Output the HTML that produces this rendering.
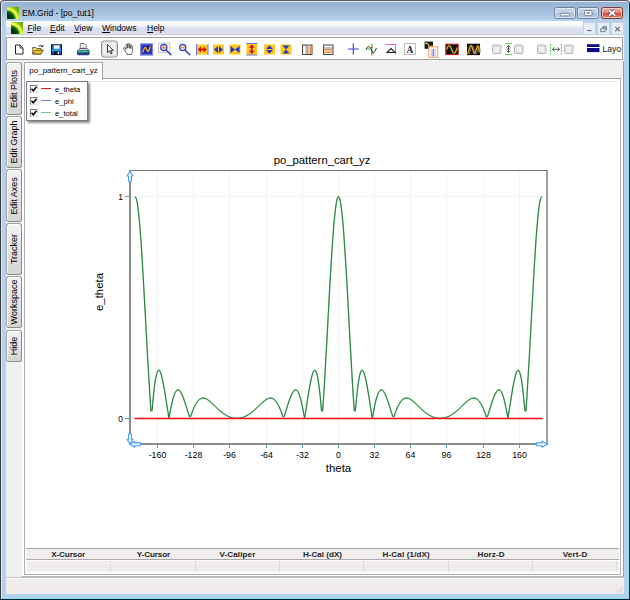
<!DOCTYPE html>
<html><head><meta charset="utf-8">
<style>
*{margin:0;padding:0;box-sizing:border-box}
html,body{width:630px;height:600px;overflow:hidden;background:#fff}
body{font-family:"Liberation Sans",sans-serif;font-size:11px;color:#000;position:relative}
.abs{position:absolute}
#frame{left:0;top:0;width:630px;height:600px;border-radius:4px 4px 0 0;background:linear-gradient(#97b3d3 0,#9cb8d7 6px,#b5d1eb 20px,#b6d1eb 100%);border:1px solid #5c5c5c;border-left-color:#3c3c3a;box-shadow:inset 1px 1px 0 0 #d8e9fa}
#title{left:22px;top:8px;font-size:8.5px;line-height:10px;color:#000;white-space:nowrap}
.cap{top:7px;height:12px;width:22px;border:1px solid #71819b;border-radius:2.5px;background:linear-gradient(#c6d8ed 0,#bcd0e8 49%,#a6c0de 50%,#b5cce7 100%);box-shadow:inset 0 0 0 1px rgba(255,255,255,.5)}
#bclose{background:linear-gradient(#eaa99c 0,#df8b78 49%,#cb4a30 50%,#dd8a6c 100%);border-color:#7a3a3c}
#menubar{left:6px;top:21px;width:577px;height:14px;background:linear-gradient(#fff 0,#f6f8fc 30%,#e0e4f1 48%,#d9ddee 62%,#dadeef 88%,#c9cce2 100%)}
.mi{top:23px;font-size:8.5px;line-height:10px;white-space:nowrap}
.mi u{text-decoration:underline}
.mdi{top:22px;width:13px;height:13px;border:1px solid #c9d1dc;background:#e6eef9}
#below{left:6px;top:35px;width:618px;height:559px;background:linear-gradient(#ececec 0,#fff 1px,#fff 2px,#f0f0f0 2px)}
#toolbar{left:6px;top:37px;width:617px;height:23px;background:#fff;border:1px solid #a0a0a0}
.stab{left:6px;width:16px;border:1px solid #a2a2a2;border-radius:3px 3px 3px 3px;border-right:1px solid #8c8c8c;border-bottom-color:#8c8c8c;background:linear-gradient(180deg,#f3f3f3 0,#e6e6e6 40%,#d5d5d5 100%);box-shadow:inset 1px 1px 0 rgba(255,255,255,.8)}
.stab span{position:absolute;left:50%;top:50%;white-space:nowrap;transform:translate(-50%,-50%) rotate(-90deg);font-size:9px;line-height:10px}
#ptab{left:24px;top:62px;width:79px;height:18px;background:#fff;border:1px solid #a6a6ae;border-bottom:none}
#ptab span{position:absolute;left:4.3px;top:2.7px;font-size:8px;line-height:10px;white-space:nowrap}
#panel{left:24px;top:78px;width:597px;height:497px;background:#fff;border:1px solid #aeaeb6;border-top-color:#9c9ca4}
#legend{left:26.400px;top:80.800px;width:61.600px;height:40.200px;background:#fff;border:1px solid #7a7a7a;box-shadow:2px 2px 2px rgba(0,0,0,.45)}
.cb{left:29.500px;width:8px;height:8px;border:1px solid #e4e4e4;border-top-color:#7c7c7c;border-left-color:#7c7c7c;background:#fff}
.ll{left:40.800px;width:10px;height:1.300px}
.lt{left:55px;font-size:7.6px;line-height:9px;white-space:nowrap}
.th{top:548.700px;height:11px;font-size:7.8px;font-weight:bold;line-height:11px;text-align:center;white-space:nowrap;color:#222}
#status{left:6px;top:578px;width:618px;height:16px;background:#f0edec;border-top:1px solid #fff}
svg text{font-family:"Liberation Sans",sans-serif}
</style></head><body>
<div id="frame" class="abs"></div>
<div class="abs" style="left:628px;top:3px;width:1px;height:596px;background:#96dcff"></div><div class="abs" style="left:629px;top:3px;width:1px;height:597px;background:#0e2c3a"></div><div class="abs" style="left:2px;top:598px;width:627px;height:1px;background:#7adcff"></div><div class="abs" style="left:0;top:599px;width:630px;height:1px;background:#0a2028"></div>
<!-- title -->
<svg class="abs" style="left:7px;top:7px" width="12" height="12" viewBox="0 0 12 12"><defs><radialGradient id="ig" gradientUnits="userSpaceOnUse" cx="-0.500" cy="12.500" r="17"><stop offset="0" stop-color="#2a5a14"/><stop offset=".18" stop-color="#0a3008"/><stop offset=".4" stop-color="#0c4a0c"/><stop offset=".5" stop-color="#2a8a14"/><stop offset=".58" stop-color="#d8ee30"/><stop offset=".64" stop-color="#ffff48"/><stop offset=".72" stop-color="#c0e428"/><stop offset=".8" stop-color="#7cc010"/><stop offset="1" stop-color="#5c9c08"/></radialGradient></defs><rect width="12" height="12" fill="url(#ig)"/></svg>
<div id="title" class="abs">EM.Grid - [po_tut1]</div>
<div class="abs cap" style="left:554px"></div>
<div class="abs cap" style="left:577px"></div>
<div id="bclose" class="abs cap" style="left:601px"></div>
<svg class="abs" style="left:554px;top:7px" width="70" height="12" viewBox="0 0 70 12">
<rect x="6.500" y="6.300" width="9" height="2.600" rx="1.200" fill="#fff" stroke="#6a7282" stroke-width=".9"/>
<rect x="30.500" y="3.500" width="7.500" height="5.200" rx="1" fill="#fff" stroke="#6a7282" stroke-width=".9"/><rect x="32.600" y="5.400" width="3.300" height="1.300" fill="#5b6a88"/>
<path d="M55.200 3.300 L61.200 8.700 M61.200 3.300 L55.200 8.700" stroke="#6a5560" stroke-width="3.200" stroke-linecap="butt"/>
<path d="M55.200 3.300 L61.200 8.700 M61.200 3.300 L55.200 8.700" stroke="#fff" stroke-width="1.800"/>
</svg>
<!-- menubar -->
<div id="menubar" class="abs"></div>
<svg class="abs" style="left:11px;top:22px" width="12" height="12" viewBox="0 0 12 12"><rect width="12" height="12" fill="url(#ig)"/></svg>
<div class="abs mi" style="left:27.5px"><u>F</u>ile</div>
<div class="abs mi" style="left:50px"><u>E</u>dit</div>
<div class="abs mi" style="left:74px"><u>V</u>iew</div>
<div class="abs mi" style="left:102px"><u>W</u>indows</div>
<div class="abs mi" style="left:147px"><u>H</u>elp</div>
<div class="abs mdi" style="left:583px"></div>
<div class="abs mdi" style="left:597px"></div>
<div class="abs mdi" style="left:611px"></div>
<svg class="abs" style="left:583px;top:22px" width="41" height="13" viewBox="0 0 41 13">
<rect x="4" y="8" width="4.600" height="1.100" fill="#6b7484"/>
<path d="M19.300 4.700 h4.200 v3.600 M19.300 5.700 h4.200" fill="none" stroke="#6b7484" stroke-width=".9"/><rect x="17.800" y="6.700" width="4.200" height="3" fill="#e6eef9" stroke="#6b7484" stroke-width=".9"/>
<path d="M32.200 4.900 L36.800 9.300 M36.800 4.900 L32.200 9.300" stroke="#6b7484" stroke-width="1.200"/>
</svg>
<div id="below" class="abs"></div>
<div id="toolbar" class="abs"></div>
<svg class="abs" style="left:0;top:0" width="630" height="600" viewBox="0 0 630 600">
<!-- new -->
<path d="M15.500 45 h4.500 l3 3 v6 h-7.500 z" fill="#fff" stroke="#222" stroke-width="1"/>
<path d="M20 45 v3 h3" fill="none" stroke="#222" stroke-width=".8"/>
<!-- open -->
<path d="M32.700 54 v-6.500 h3 l1 1 h4.300 v5.500 z" fill="#ffe56a" stroke="#4a3c0c" stroke-width=".8"/>
<path d="M32.700 54 l2.400 -3.800 h8.300 l-2.400 3.800 z" fill="#f2c22c" stroke="#4a3c0c" stroke-width=".8"/>
<path d="M38.500 46.300 q2.300 -2 4.300 0.300 M42.900 46.700 l-1.700 -.2 M42.900 46.700 l.2 -1.600" fill="none" stroke="#222" stroke-width=".9"/>
<!-- save -->
<rect x="51.500" y="44.800" width="10" height="9.800" fill="#1f60c8" stroke="#0a1430" stroke-width="1"/>
<rect x="53.800" y="45.300" width="5.800" height="3.500" fill="#f2f5fb"/>
<rect x="52" y="49.300" width="9" height="1.600" fill="#30a8ee"/>
<rect x="53.800" y="51.400" width="5.800" height="3.200" fill="#0a1430"/>
<rect x="57.600" y="52" width="1.400" height="2" fill="#f2f5fb"/>
<!-- print -->
<path d="M80.300 43.500 h4.200 l1.700 1.700 v3.800 h-5.900 z" fill="#fff" stroke="#555" stroke-width=".8"/>
<path d="M82 46 h2.500 M82 47.500 h3" stroke="#aaa" stroke-width=".6"/>
<path d="M77.800 51 l2 -2.500 h7.400 l2 2.500 z" fill="#d4d8de" stroke="#3a4060" stroke-width=".8"/>
<rect x="77.400" y="50.600" width="11.700" height="4.200" rx=".9" fill="#24368c" stroke="#1a2860" stroke-width=".8"/>
<rect x="77.800" y="50.500" width="10.900" height="1.900" fill="#3cc88c"/>
<!-- pointer button -->
<rect x="101.500" y="41" width="16" height="16" rx="2.500" fill="#efefef" stroke="#8a8a8a" stroke-width="1"/>
<rect x="102.500" y="42" width="14" height="14" rx="1.800" fill="none" stroke="#d6d6d6" stroke-width="1"/>
<path d="M107.500 44.500 v8.200 l2 -1.800 l1.400 3 l1.200 -.6 l-1.400 -2.900 h2.600 z" fill="#fff" stroke="#222" stroke-width=".9" stroke-linejoin="round"/>
<!-- hand -->
<path transform="translate(0,-.8)" d="M126 50.500 V45.800 a.8 .8 0 0 1 1.600 0 V49 V45 a.8 .8 0 0 1 1.600 0 V49 V45.600 a.8 .8 0 0 1 1.600 0 V49.500 V47.200 a.8 .8 0 0 1 1.600 0 V52 q0 1.600 -1 2.600 V55.300 H127 V54.400 q-1 -1 -1.800 -2.600 L123.500 49.600 q-.5 -1 .3 -1.300 q.7 -.2 1.200 .6 Z" fill="#fff" stroke="#3a3a3a" stroke-width=".75" stroke-linejoin="round"/>
<!-- blue sine icon -->
<rect x="140.700" y="43.900" width="11.800" height="11.100" fill="#1a22a8" stroke="#7d88ea" stroke-width="1.300"/>
<rect x="142.300" y="45.500" width="8.600" height="7.900" fill="none" stroke="#4152cc" stroke-width=".6"/>
<path d="M142.300 52.300 C143.600 52.300 143.800 47.300 145.200 47.300 S146.700 51.600 148 51.600 S149.400 46.600 151 46.600" fill="none" stroke="#f0c21e" stroke-width="1.300"/>
<!-- zoom in -->
<rect x="158.500" y="43.100" width="11.300" height="9.400" fill="#fbfbfb" stroke="#c6c6c6" stroke-width="1"/>
<circle cx="163.800" cy="47.600" r="3.100" fill="#fff2c8" stroke="#3848d0" stroke-width="1.300"/>
<path d="M162 47.600 h3.600 M163.800 45.800 v3.600" stroke="#f08426" stroke-width="1.300"/>
<path d="M166.300 50.200 l4.600 4.600" stroke="#2a3cc0" stroke-width="1.500" stroke-linecap="round"/>
<!-- zoom out -->
<circle cx="182.700" cy="47.600" r="3.100" fill="#fff2c8" stroke="#3848d0" stroke-width="1.300"/>
<path d="M180.900 47.600 h3.600" stroke="#f08426" stroke-width="1.300"/>
<path d="M185.200 50.200 l4.600 4.600" stroke="#2a3cc0" stroke-width="1.500" stroke-linecap="round"/>
<!-- yellow icons -->
<g>
<rect x="196.500" y="44.500" width="11.500" height="10" fill="#fdc81e"/>
<path d="M196.500 44 v11 M208 44 v11" stroke="#6a78dc" stroke-width="1"/>
<path d="M197.800 49.500 l3.200 -2.900 v5.800 z M206.700 49.500 l-3.200 -2.900 v5.800 z" fill="#d01010"/><path d="M199 49.500 h6.500" stroke="#d01010" stroke-width="1.700"/>
<rect x="213" y="44.500" width="11" height="10" fill="#fdc81e"/>
<path d="M214 49.500 l4 -3.500 v7 z M223 49.500 l-4 -3.500 v7 z" fill="#2338c8"/>
<rect x="229.500" y="44.500" width="11" height="10" fill="#fdc81e"/>
<path d="M230.500 46 l4.500 3.500 l-4.500 3.500 z M239.500 46 l-4.500 3.500 l4.500 3.500 z" fill="#2338c8"/>
<rect x="246.500" y="43.500" width="10.500" height="11.500" fill="#fdc81e"/>
<path d="M246 43.500 h11.500 M246 55 h11.500" stroke="#6a78dc" stroke-width="1"/>
<path d="M251.800 44.600 l-2.900 3.200 h5.800 z M251.800 53.900 l-2.900 -3.200 h5.800 z" fill="#d01010"/><path d="M251.800 46 v6.500" stroke="#d01010" stroke-width="1.700"/>
<rect x="264" y="44.500" width="11" height="10" fill="#fdc81e"/>
<path d="M269.500 45.300 l-3.500 3.700 h7 z M269.500 53.800 l-3.500 -3.700 h7 z" fill="#2338c8"/>
<rect x="280.500" y="44.500" width="11" height="10" fill="#fdc81e"/>
<path d="M282.500 45.500 h7 l-3.500 4 z M282.500 53.500 h7 l-3.500 -4 z" fill="#2338c8"/>
</g>
<!-- table icons -->
<rect x="302.500" y="45" width="9.500" height="9.500" fill="#fff" stroke="#444" stroke-width="1"/>
<rect x="307" y="45.500" width="1.500" height="8.500" fill="#e88a4a"/><rect x="309.500" y="45.500" width="1.500" height="8.500" fill="#e88a4a"/>
<path d="M306 45 v9.500" stroke="#666" stroke-width=".8"/>
<rect x="323.500" y="45" width="9.500" height="9.500" fill="#fff" stroke="#444" stroke-width="1"/>
<rect x="324" y="49" width="8.500" height="1.500" fill="#e88a4a"/><rect x="324" y="51.500" width="8.500" height="1.500" fill="#e88a4a"/>
<path d="M323.500 48 h9.500" stroke="#666" stroke-width=".8"/>
<!-- plus -->
<path d="M353.300 43.500 v11 M347.800 49 h11" stroke="#3a48c4" stroke-width="1.150"/>
<!-- curve marker -->
<path d="M371.800 43.500 v12 M366 49 h4" stroke="#30c040" stroke-width="1.100"/>
<path d="M366 49.500 q2 -5 4.500 -1.500 l2.500 5.500 q1.500 -1 3.500 -5.500" fill="none" stroke="#333" stroke-width="1"/>
<circle cx="371.800" cy="47.300" r="1" fill="#e86010"/>
<!-- pink triangle -->
<path d="M385 44.500 h10.500 v10" fill="none" stroke="#f060d0" stroke-width="1"/>
<path d="M387 52.500 l4 -4 l4 4 z" fill="#fff" stroke="#222" stroke-width="1.100"/>
<!-- A box -->
<rect x="404.500" y="43.500" width="11" height="11" fill="#fff" stroke="#bdbdbd" stroke-width="1"/>
<text x="410" y="52.500" style="font-family:'Liberation Serif',serif;font-weight:bold" font-size="9.500" text-anchor="middle" fill="#1a1a3a">A</text>
<!-- black/orange -->
<rect x="424.600" y="41.600" width="8.400" height="7.200" fill="#111"/>
<path d="M425.300 44.200 C426.300 42.600 427.300 42.600 428.300 44.800 S430.500 47.800 432.300 45.600" fill="none" stroke="#f0cc20" stroke-width="1.300"/>
<rect x="428.700" y="46.800" width="9" height="10.500" fill="#fff" stroke="#f59454" stroke-width="1"/>
<path d="M431.300 49 v7.500 M435.200 49 v7.500" stroke="#d0d0dc" stroke-width="1.400"/><path d="M433.250 49 v7.500" stroke="#5566e4" stroke-width="1.200"/>
<!-- black sine red border -->
<rect x="445.800" y="44.200" width="12.400" height="10.400" fill="#111" stroke="#c81818" stroke-width="1"/>
<path d="M446.800 49.500 C447.800 45 449.600 44.500 450.800 47.500 S453.500 55 455.200 52.500 S456.800 48.500 457.300 47.500" fill="none" stroke="#e8c418" stroke-width="1.200"/>
<!-- black sine 2 -->
<rect x="467" y="43.700" width="13" height="11.400" fill="#111"/>
<path d="M468.500 53.500 C469.500 50 470.500 45 471.800 45.500 S473.800 54 475 53.500 S477 46 478.200 46 S479.300 50 479.600 52" fill="none" stroke="#7a86a8" stroke-width=".8" transform="translate(.9,.6)"/>
<path d="M467.800 54 C469 50 470 45 471.300 45.500 S473.300 54 474.600 53.500 S476.600 46 477.800 46 S479 50 479.300 52.500" fill="none" stroke="#f0a818" stroke-width="1.300"/>
<!-- checkboxes -->
<g fill="#f2f2f2" stroke="#b4b4b4" stroke-width="1">
<rect x="492.500" y="45" width="8.500" height="8.500" rx="1"/><rect x="514.500" y="45" width="8.500" height="8.500" rx="1"/>
<rect x="537.500" y="45" width="8.500" height="8.500" rx="1"/><rect x="564.500" y="45" width="8.500" height="8.500" rx="1"/>
</g>
<g fill="none" stroke="#dcdcdc" stroke-width="1">
<rect x="494" y="46.500" width="5.500" height="5.500"/><rect x="516" y="46.500" width="5.500" height="5.500"/><rect x="539" y="46.500" width="5.500" height="5.500"/><rect x="566" y="46.500" width="5.500" height="5.500"/>
</g>
<path d="M505 43.500 h7 M505 54.500 h7" stroke="#50e050" stroke-width="1.200"/>
<path d="M508.500 45.500 v7 M506.500 47.500 l2 -2 l2 2 M506.500 50.500 l2 2 l2 -2 M507 49 h3" fill="none" stroke="#444" stroke-width=".9"/>
<path d="M550.500 44 v10.500 M561.500 44 v10.500" stroke="#50e050" stroke-width="1.200" stroke-dasharray="2 1"/>
<path d="M552.500 49.300 h7 M554.500 47.300 l-2 2 l2 2 M557.500 47.300 l2 2 l-2 2" fill="none" stroke="#444" stroke-width=".9"/>
<!-- navy -->
<rect x="587" y="44.200" width="12.500" height="2.800" fill="#0a0a82"/><rect x="587" y="48" width="12.500" height="4.100" fill="#0a0a82"/>
<clipPath id="tbc"><rect x="7" y="38" width="614.300" height="21"/></clipPath><text x="602.500" y="51.800" font-size="8.500" fill="#111" clip-path="url(#tbc)">Layou</text>
</svg>

<!-- side tabs -->
<div class="abs" style="left:623px;top:61px;width:1px;height:516px;background:#9a9a9a"></div>
<div class="abs stab" style="top:62px;height:53px"><span>Edit Plots</span></div>
<div class="abs stab" style="top:116px;height:52px"><span>Edit Graph</span></div>
<div class="abs stab" style="top:169px;height:53px"><span>Edit Axes</span></div>
<div class="abs stab" style="top:223px;height:52px"><span>Tracker</span></div>
<div class="abs stab" style="top:276px;height:52px"><span>Workspace</span></div>
<div class="abs stab" style="top:330px;height:32px"><span>Hide</span></div>
<!-- panel -->
<div class="abs" style="left:22px;top:79px;width:601px;height:497px;background:#fff"></div>
<div id="panel" class="abs"></div>
<div class="abs" style="left:26px;top:81px;width:593px;height:1px;background:#e6e6e6"></div>
<div id="ptab" class="abs"><span>po_pattern_cart_yz</span></div>
<!-- chart -->
<svg class="abs" style="left:0;top:0" width="630" height="600" viewBox="0 0 630 600">
<g stroke="#f4f4f4" stroke-width="1" shape-rendering="crispEdges">
<line x1="157.5" y1="171" x2="157.5" y2="443"/>
<line x1="193.5" y1="171" x2="193.5" y2="443"/>
<line x1="229.5" y1="171" x2="229.5" y2="443"/>
<line x1="266.5" y1="171" x2="266.5" y2="443"/>
<line x1="302.5" y1="171" x2="302.5" y2="443"/>
<line x1="338.5" y1="171" x2="338.5" y2="443"/>
<line x1="374.5" y1="171" x2="374.5" y2="443"/>
<line x1="410.5" y1="171" x2="410.5" y2="443"/>
<line x1="446.5" y1="171" x2="446.5" y2="443"/>
<line x1="483.5" y1="171" x2="483.5" y2="443"/>
<line x1="519.5" y1="171" x2="519.5" y2="443"/>
<line x1="131" y1="196.500" x2="547" y2="196.500"/>
<line x1="131" y1="418.500" x2="547" y2="418.500"/>
</g>
<path d="M130 170.500 H547.500" fill="none" stroke="#707070" stroke-width="1"/><rect x="546.300" y="170" width="1.450" height="275" fill="#7e7e7e"/>
<rect x="129" y="170" width="2" height="274" fill="#8c8c8c"/>
<rect x="129" y="443" width="419" height="2" fill="#8c8c8c"/>
<g stroke="#4aa3b5" stroke-width="1" shape-rendering="crispEdges"><line x1="125" y1="196.500" x2="129" y2="196.500"/><line x1="125" y1="418.500" x2="129" y2="418.500"/>
<line x1="157.5" y1="445" x2="157.5" y2="448"/>
<line x1="193.5" y1="445" x2="193.5" y2="448"/>
<line x1="229.5" y1="445" x2="229.5" y2="448"/>
<line x1="266.5" y1="445" x2="266.5" y2="448"/>
<line x1="302.5" y1="445" x2="302.5" y2="448"/>
<line x1="338.5" y1="445" x2="338.5" y2="448"/>
<line x1="374.5" y1="445" x2="374.5" y2="448"/>
<line x1="410.5" y1="445" x2="410.5" y2="448"/>
<line x1="446.5" y1="445" x2="446.5" y2="448"/>
<line x1="483.5" y1="445" x2="483.5" y2="448"/>
<line x1="519.5" y1="445" x2="519.5" y2="448"/>
</g>
<polyline fill="none" stroke="#8ed496" stroke-width="1.500" stroke-linejoin="round" points="135.1,196.5 136.2,198.3 137.4,203.5 138.5,212.1 139.6,223.8 140.8,238.3 141.9,255.0 143.0,273.6 144.1,293.5 145.3,314.2 146.4,335.1 147.5,355.7 148.7,375.5 149.8,394.0 150.9,410.9 152.0,410.8 153.2,398.0 154.3,387.7 155.4,379.7 156.6,374.2 157.7,371.1 158.8,370.1 160.0,371.2 161.1,374.0 162.2,378.3 163.3,383.8 164.5,390.1 165.6,397.1 166.7,404.2 167.9,411.4 169.0,418.3 170.1,411.9 171.3,406.1 172.4,401.1 173.5,396.9 174.6,393.7 175.8,391.5 176.9,390.2 178.0,389.8 179.2,390.3 180.3,391.5 181.4,393.4 182.6,395.9 183.7,398.8 184.8,402.0 185.9,405.5 187.1,409.1 188.2,412.7 189.3,416.3 190.5,416.9 191.6,413.7 192.7,410.7 193.8,408.0 195.0,405.6 196.1,403.6 197.2,401.8 198.4,400.5 199.5,399.4 200.6,398.7 201.8,398.2 202.9,398.0 204.0,398.1 205.1,398.4 206.3,398.9 207.4,399.5 208.5,400.3 209.7,401.2 210.8,402.2 211.9,403.2 213.1,404.3 214.2,405.4 215.3,406.5 216.4,407.6 217.6,408.7 218.7,409.7 219.8,410.7 221.0,411.7 222.1,412.6 223.2,413.4 224.4,414.2 225.5,414.9 226.6,415.5 227.7,416.1 228.9,416.6 230.0,417.1 231.1,417.5 232.3,417.8 233.4,418.0 234.5,418.2 235.6,418.3 236.8,418.3 237.9,418.3 239.0,418.2 240.2,418.0 241.3,417.8 242.4,417.5 243.6,417.1 244.7,416.6 245.8,416.1 246.9,415.5 248.1,414.9 249.2,414.2 250.3,413.4 251.5,412.6 252.6,411.7 253.7,410.7 254.9,409.7 256.0,408.7 257.1,407.6 258.2,406.5 259.4,405.4 260.5,404.3 261.6,403.2 262.8,402.2 263.9,401.2 265.0,400.3 266.1,399.5 267.3,398.9 268.4,398.4 269.5,398.1 270.7,398.0 271.8,398.2 272.9,398.7 274.1,399.4 275.2,400.5 276.3,401.8 277.4,403.6 278.6,405.6 279.7,408.0 280.8,410.7 282.0,413.7 283.1,416.9 284.2,416.3 285.4,412.7 286.5,409.1 287.6,405.5 288.7,402.0 289.9,398.8 291.0,395.9 292.1,393.4 293.3,391.5 294.4,390.3 295.5,389.8 296.7,390.2 297.8,391.5 298.9,393.7 300.0,396.9 301.2,401.1 302.3,406.1 303.4,411.9 304.6,418.3 305.7,411.4 306.8,404.2 307.9,397.1 309.1,390.1 310.2,383.8 311.3,378.3 312.5,374.0 313.6,371.2 314.7,370.1 315.9,371.1 317.0,374.2 318.1,379.7 319.2,387.7 320.4,398.0 321.5,410.8 322.6,410.9 323.8,394.0 324.9,375.5 326.0,355.7 327.2,335.1 328.3,314.2 329.4,293.5 330.5,273.6 331.7,255.0 332.8,238.3 333.9,223.8 335.1,212.1 336.2,203.5 337.3,198.3 338.4,196.5 339.6,198.3 340.7,203.5 341.8,212.1 343.0,223.8 344.1,238.3 345.2,255.0 346.4,273.6 347.5,293.5 348.6,314.2 349.7,335.1 350.9,355.7 352.0,375.5 353.1,394.0 354.3,410.9 355.4,410.8 356.5,398.0 357.7,387.7 358.8,379.7 359.9,374.2 361.0,371.1 362.2,370.1 363.3,371.2 364.4,374.0 365.6,378.3 366.7,383.8 367.8,390.1 369.0,397.1 370.1,404.2 371.2,411.4 372.3,418.3 373.5,411.9 374.6,406.1 375.7,401.1 376.9,396.9 378.0,393.7 379.1,391.5 380.2,390.2 381.4,389.8 382.5,390.3 383.6,391.5 384.8,393.4 385.9,395.9 387.0,398.8 388.2,402.0 389.3,405.5 390.4,409.1 391.5,412.7 392.7,416.3 393.8,416.9 394.9,413.7 396.1,410.7 397.2,408.0 398.3,405.6 399.5,403.6 400.6,401.8 401.7,400.5 402.8,399.4 404.0,398.7 405.1,398.2 406.2,398.0 407.4,398.1 408.5,398.4 409.6,398.9 410.8,399.5 411.9,400.3 413.0,401.2 414.1,402.2 415.3,403.2 416.4,404.3 417.5,405.4 418.7,406.5 419.8,407.6 420.9,408.7 422.0,409.7 423.2,410.7 424.3,411.7 425.4,412.6 426.6,413.4 427.7,414.2 428.8,414.9 430.0,415.5 431.1,416.1 432.2,416.6 433.3,417.1 434.5,417.5 435.6,417.8 436.7,418.0 437.9,418.2 439.0,418.3 440.1,418.3 441.3,418.3 442.4,418.2 443.5,418.0 444.6,417.8 445.8,417.5 446.9,417.1 448.0,416.6 449.2,416.1 450.3,415.5 451.4,414.9 452.5,414.2 453.7,413.4 454.8,412.6 455.9,411.7 457.1,410.7 458.2,409.7 459.3,408.7 460.5,407.6 461.6,406.5 462.7,405.4 463.8,404.3 465.0,403.2 466.1,402.2 467.2,401.2 468.4,400.3 469.5,399.5 470.6,398.9 471.8,398.4 472.9,398.1 474.0,398.0 475.1,398.2 476.3,398.7 477.4,399.4 478.5,400.5 479.7,401.8 480.8,403.6 481.9,405.6 483.1,408.0 484.2,410.7 485.3,413.7 486.4,416.9 487.6,416.3 488.7,412.7 489.8,409.1 491.0,405.5 492.1,402.0 493.2,398.8 494.3,395.9 495.5,393.4 496.6,391.5 497.7,390.3 498.9,389.8 500.0,390.2 501.1,391.5 502.3,393.7 503.4,396.9 504.5,401.1 505.6,406.1 506.8,411.9 507.9,418.3 509.0,411.4 510.2,404.2 511.3,397.1 512.4,390.1 513.6,383.8 514.7,378.3 515.8,374.0 516.9,371.2 518.1,370.1 519.2,371.1 520.3,374.2 521.5,379.7 522.6,387.7 523.7,398.0 524.9,410.8 526.0,410.9 527.1,394.0 528.2,375.5 529.4,355.7 530.5,335.1 531.6,314.2 532.8,293.5 533.9,273.6 535.0,255.0 536.1,238.3 537.3,223.8 538.4,212.1 539.5,203.5 540.7,198.3 541.8,196.5"/>
<polyline fill="none" stroke="#156c36" stroke-width=".85" stroke-linejoin="round" points="135.1,196.5 136.2,198.3 137.4,203.5 138.5,212.1 139.6,223.8 140.8,238.3 141.9,255.0 143.0,273.6 144.1,293.5 145.3,314.2 146.4,335.1 147.5,355.7 148.7,375.5 149.8,394.0 150.9,410.9 152.0,410.8 153.2,398.0 154.3,387.7 155.4,379.7 156.6,374.2 157.7,371.1 158.8,370.1 160.0,371.2 161.1,374.0 162.2,378.3 163.3,383.8 164.5,390.1 165.6,397.1 166.7,404.2 167.9,411.4 169.0,418.3 170.1,411.9 171.3,406.1 172.4,401.1 173.5,396.9 174.6,393.7 175.8,391.5 176.9,390.2 178.0,389.8 179.2,390.3 180.3,391.5 181.4,393.4 182.6,395.9 183.7,398.8 184.8,402.0 185.9,405.5 187.1,409.1 188.2,412.7 189.3,416.3 190.5,416.9 191.6,413.7 192.7,410.7 193.8,408.0 195.0,405.6 196.1,403.6 197.2,401.8 198.4,400.5 199.5,399.4 200.6,398.7 201.8,398.2 202.9,398.0 204.0,398.1 205.1,398.4 206.3,398.9 207.4,399.5 208.5,400.3 209.7,401.2 210.8,402.2 211.9,403.2 213.1,404.3 214.2,405.4 215.3,406.5 216.4,407.6 217.6,408.7 218.7,409.7 219.8,410.7 221.0,411.7 222.1,412.6 223.2,413.4 224.4,414.2 225.5,414.9 226.6,415.5 227.7,416.1 228.9,416.6 230.0,417.1 231.1,417.5 232.3,417.8 233.4,418.0 234.5,418.2 235.6,418.3 236.8,418.3 237.9,418.3 239.0,418.2 240.2,418.0 241.3,417.8 242.4,417.5 243.6,417.1 244.7,416.6 245.8,416.1 246.9,415.5 248.1,414.9 249.2,414.2 250.3,413.4 251.5,412.6 252.6,411.7 253.7,410.7 254.9,409.7 256.0,408.7 257.1,407.6 258.2,406.5 259.4,405.4 260.5,404.3 261.6,403.2 262.8,402.2 263.9,401.2 265.0,400.3 266.1,399.5 267.3,398.9 268.4,398.4 269.5,398.1 270.7,398.0 271.8,398.2 272.9,398.7 274.1,399.4 275.2,400.5 276.3,401.8 277.4,403.6 278.6,405.6 279.7,408.0 280.8,410.7 282.0,413.7 283.1,416.9 284.2,416.3 285.4,412.7 286.5,409.1 287.6,405.5 288.7,402.0 289.9,398.8 291.0,395.9 292.1,393.4 293.3,391.5 294.4,390.3 295.5,389.8 296.7,390.2 297.8,391.5 298.9,393.7 300.0,396.9 301.2,401.1 302.3,406.1 303.4,411.9 304.6,418.3 305.7,411.4 306.8,404.2 307.9,397.1 309.1,390.1 310.2,383.8 311.3,378.3 312.5,374.0 313.6,371.2 314.7,370.1 315.9,371.1 317.0,374.2 318.1,379.7 319.2,387.7 320.4,398.0 321.5,410.8 322.6,410.9 323.8,394.0 324.9,375.5 326.0,355.7 327.2,335.1 328.3,314.2 329.4,293.5 330.5,273.6 331.7,255.0 332.8,238.3 333.9,223.8 335.1,212.1 336.2,203.5 337.3,198.3 338.4,196.5 339.6,198.3 340.7,203.5 341.8,212.1 343.0,223.8 344.1,238.3 345.2,255.0 346.4,273.6 347.5,293.5 348.6,314.2 349.7,335.1 350.9,355.7 352.0,375.5 353.1,394.0 354.3,410.9 355.4,410.8 356.5,398.0 357.7,387.7 358.8,379.7 359.9,374.2 361.0,371.1 362.2,370.1 363.3,371.2 364.4,374.0 365.6,378.3 366.7,383.8 367.8,390.1 369.0,397.1 370.1,404.2 371.2,411.4 372.3,418.3 373.5,411.9 374.6,406.1 375.7,401.1 376.9,396.9 378.0,393.7 379.1,391.5 380.2,390.2 381.4,389.8 382.5,390.3 383.6,391.5 384.8,393.4 385.9,395.9 387.0,398.8 388.2,402.0 389.3,405.5 390.4,409.1 391.5,412.7 392.7,416.3 393.8,416.9 394.9,413.7 396.1,410.7 397.2,408.0 398.3,405.6 399.5,403.6 400.6,401.8 401.7,400.5 402.8,399.4 404.0,398.7 405.1,398.2 406.2,398.0 407.4,398.1 408.5,398.4 409.6,398.9 410.8,399.5 411.9,400.3 413.0,401.2 414.1,402.2 415.3,403.2 416.4,404.3 417.5,405.4 418.7,406.5 419.8,407.6 420.9,408.7 422.0,409.7 423.2,410.7 424.3,411.7 425.4,412.6 426.6,413.4 427.7,414.2 428.8,414.9 430.0,415.5 431.1,416.1 432.2,416.6 433.3,417.1 434.5,417.5 435.6,417.8 436.7,418.0 437.9,418.2 439.0,418.3 440.1,418.3 441.3,418.3 442.4,418.2 443.5,418.0 444.6,417.8 445.8,417.5 446.9,417.1 448.0,416.6 449.2,416.1 450.3,415.5 451.4,414.9 452.5,414.2 453.7,413.4 454.8,412.6 455.9,411.7 457.1,410.7 458.2,409.7 459.3,408.7 460.5,407.6 461.6,406.5 462.7,405.4 463.8,404.3 465.0,403.2 466.1,402.2 467.2,401.2 468.4,400.3 469.5,399.5 470.6,398.9 471.8,398.4 472.9,398.1 474.0,398.0 475.1,398.2 476.3,398.7 477.4,399.4 478.5,400.5 479.7,401.8 480.8,403.6 481.9,405.6 483.1,408.0 484.2,410.7 485.3,413.7 486.4,416.9 487.6,416.3 488.7,412.7 489.8,409.1 491.0,405.5 492.1,402.0 493.2,398.8 494.3,395.9 495.5,393.4 496.6,391.5 497.7,390.3 498.9,389.8 500.0,390.2 501.1,391.5 502.3,393.7 503.4,396.9 504.5,401.1 505.6,406.1 506.8,411.9 507.9,418.3 509.0,411.4 510.2,404.2 511.3,397.1 512.4,390.1 513.6,383.8 514.7,378.3 515.8,374.0 516.9,371.2 518.1,370.1 519.2,371.1 520.3,374.2 521.5,379.7 522.6,387.7 523.7,398.0 524.9,410.8 526.0,410.9 527.1,394.0 528.2,375.5 529.4,355.7 530.5,335.1 531.6,314.2 532.8,293.5 533.9,273.6 535.0,255.0 536.1,238.3 537.3,223.8 538.4,212.1 539.5,203.5 540.7,198.3 541.8,196.5"/>
<line x1="134.500" y1="418.400" x2="542.500" y2="418.400" stroke="#f80a10" stroke-width="1.500"/>
<text x="322" y="164" font-size="11.300" text-anchor="middle">po_pattern_cart_yz</text>
<text x="123" y="200" font-size="8.500" text-anchor="end">1</text>
<text x="123" y="422" font-size="8.500" text-anchor="end">0</text>
<text transform="translate(103,292) rotate(-90)" font-size="11.400" text-anchor="middle">e_theta</text>
<text x="338.500" y="472" font-size="11.400" text-anchor="middle">theta</text>
<g font-size="8.800" text-anchor="middle">
<text x="157.5" y="457.800">-160</text>
<text x="193.5" y="457.800">-128</text>
<text x="229.5" y="457.800">-96</text>
<text x="266.5" y="457.800">-64</text>
<text x="302.5" y="457.800">-32</text>
<text x="338.5" y="457.800">0</text>
<text x="374.5" y="457.800">32</text>
<text x="410.5" y="457.800">64</text>
<text x="446.5" y="457.800">96</text>
<text x="483.5" y="457.800">128</text>
<text x="519.5" y="457.800">160</text>
</g>
<!-- blue arrows -->
<g fill="#fff" stroke="#3f9bff" stroke-width="1.100" stroke-linejoin="round">
<path d="M130 171.500 l-3 4.500 h1.600 v5.200 h2.800 v-5.200 h1.600 z"/>
<path d="M130 444 l-3 -4.700 h1.600 v-5.300 h2.800 v5.300 h1.600 z"/>
<path d="M130 444.300 l4.800 -3 v1.600 h5.700 v2.800 h-5.700 v1.600 z"/>
<path d="M547.300 444.300 l-5.300 -3 v1.600 h-5.500 v2.800 h5.500 v1.600 z"/>
</g>
</svg>
<!-- legend -->
<div id="legend" class="abs"></div>
<div class="abs cb" style="top:85px"></div><svg class="abs" style="left:29.500px;top:85px" width="8" height="8" viewBox="0 0 8 8"><path d="M1.500 3.800 L3.300 5.800 L6.600 1.800" fill="none" stroke="#000" stroke-width="1.500"/></svg><div class="abs ll" style="top:88px;background:#f0161c"></div><div class="abs lt" style="top:84.5px">e_theta</div>
<div class="abs cb" style="top:97px"></div><svg class="abs" style="left:29.500px;top:97px" width="8" height="8" viewBox="0 0 8 8"><path d="M1.500 3.800 L3.300 5.800 L6.600 1.800" fill="none" stroke="#000" stroke-width="1.500"/></svg><div class="abs ll" style="top:100px;background:#7a7acc"></div><div class="abs lt" style="top:96.5px">e_phi</div>
<div class="abs cb" style="top:109px"></div><svg class="abs" style="left:29.500px;top:109px" width="8" height="8" viewBox="0 0 8 8"><path d="M1.500 3.800 L3.300 5.800 L6.600 1.800" fill="none" stroke="#000" stroke-width="1.500"/></svg><div class="abs ll" style="top:112px;background:#7dc383"></div><div class="abs lt" style="top:108.5px">e_total</div>

<!-- bottom table -->
<div class="abs" style="left:26.500px;top:548px;width:592.500px;height:24px;background:#f0edec"></div>
<div class="abs" style="left:26px;top:547.500px;width:593px;height:1px;background:#a4a4a4"></div>
<div class="abs" style="left:26px;top:559px;width:593px;height:1px;background:#a8a8a8"></div>
<div class="abs" style="left:26px;top:560px;width:593px;height:1px;background:#fff"></div>
<div class="abs th" style="left:26.0px;width:84.3px;font-size:8.1px;letter-spacing:-0.075px">X-Cursor</div><div class="abs" style="left:110px;top:561px;width:1px;height:11px;background:#dcdcdc"></div>
<div class="abs th" style="left:111.3px;width:84.3px;font-size:8.1px;letter-spacing:-0.09px">Y-Cursor</div><div class="abs" style="left:195px;top:561px;width:1px;height:11px;background:#dcdcdc"></div>
<div class="abs th" style="left:195.3px;width:84.3px;font-size:8.1px;letter-spacing:0.1px">V-Caliper</div><div class="abs" style="left:279px;top:561px;width:1px;height:11px;background:#dcdcdc"></div>
<div class="abs th" style="left:280.3px;width:84.3px;font-size:8.1px;letter-spacing:0px">H-Cal (dX)</div><div class="abs" style="left:363px;top:561px;width:1px;height:11px;background:#dcdcdc"></div>
<div class="abs th" style="left:364.1px;width:84.3px;font-size:8.1px;letter-spacing:0.125px">H-Cal (1/dX)</div><div class="abs" style="left:448px;top:561px;width:1px;height:11px;background:#dcdcdc"></div>
<div class="abs th" style="left:449.0px;width:84.3px;font-size:8.1px;letter-spacing:0.1px">Horz-D</div><div class="abs" style="left:532px;top:561px;width:1px;height:11px;background:#dcdcdc"></div>
<div class="abs th" style="left:533.0px;width:84.3px;font-size:8.1px;letter-spacing:0.15px">Vert-D</div><div class="abs" style="left:616px;top:561px;width:1px;height:11px;background:#dcdcdc"></div>

<div class="abs" style="left:21px;top:576px;width:603px;height:2px;background:#bcbcbc"></div><div class="abs" style="left:6px;top:577px;width:15px;height:1px;background:#c8c8c8"></div>
<div id="status" class="abs"></div>
<svg class="abs" style="left:615px;top:585px" width="9" height="9" viewBox="0 0 9 9" fill="#cfcbca"><rect x="6" y="1.500" width="1.300" height="1.300"/><rect x="3.700" y="3.800" width="1.300" height="1.300"/><rect x="6" y="3.800" width="1.300" height="1.300"/><rect x="1.400" y="6.100" width="1.300" height="1.300"/><rect x="3.700" y="6.100" width="1.300" height="1.300"/><rect x="6" y="6.100" width="1.300" height="1.300"/></svg>
</body></html>
